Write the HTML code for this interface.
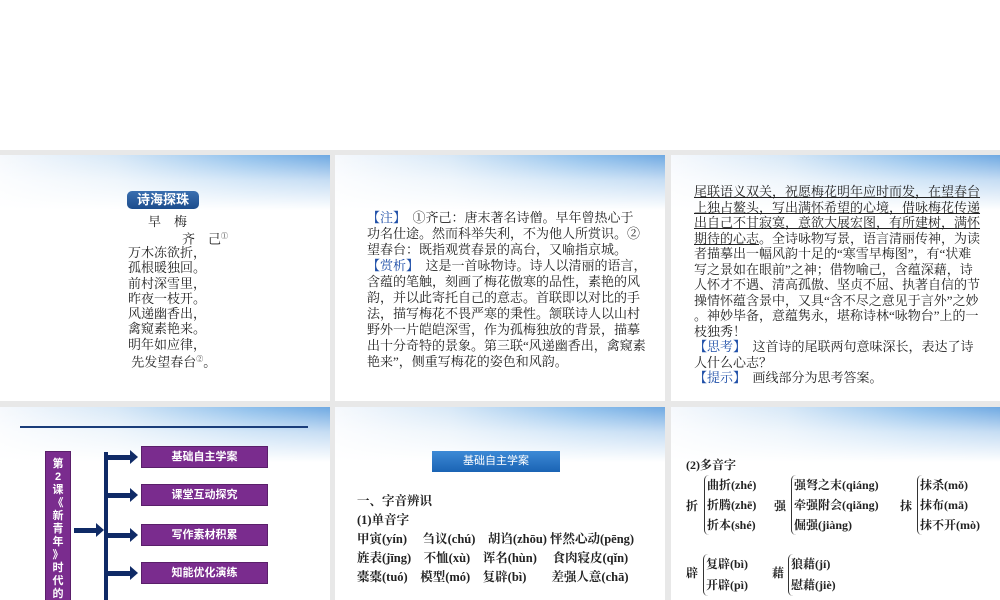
<!DOCTYPE html>
<html><head><meta charset="utf-8"><style>
*{margin:0;padding:0;box-sizing:border-box}
body{width:1000px;height:600px;background:#fff;position:relative;overflow:hidden;font-family:"Liberation Serif","Noto Serif CJK SC",serif;color:#222}
.gray{position:absolute;left:0;top:150px;width:1000px;height:450px;background:#e8e8e8}
.s{position:absolute;background:
 linear-gradient(180deg,rgba(255,255,255,0) 0,rgba(255,255,255,.6) 25px,#fff 55px),
 linear-gradient(90deg,#f6f9fd 0,#d7e8f7 35%,#8fc0ec 75%,#6fa9e2 100%);overflow:hidden}
.t{position:absolute;font-size:13px;line-height:15.6px;white-space:nowrap}
.b{color:#1f4fa8}
.u{text-decoration:underline}
.sans{font-family:"Liberation Sans","Noto Sans CJK SC",sans-serif}
.pb{position:absolute;background:#7a2c8e;color:#fff;font-size:11px;font-weight:bold;text-align:center;line-height:20px;font-family:"Liberation Sans","Noto Sans CJK SC",sans-serif;border:1px solid #5a1f6a}
.bold{font-weight:bold}
</style></head><body>
<div class="gray"></div>

<div class="s" style="left:0;top:155px;width:330px;height:246px">
 <div style="position:absolute;left:127px;top:36px;width:72px;height:18px;border-radius:5px;background:linear-gradient(180deg,#3a6fb0,#1c4c8c);color:#fff;font-size:13px;font-weight:bold;line-height:18px;text-align:center" class="sans">诗海探珠</div>
 <div class="t" style="left:148px;top:59px">早　梅</div>
 <div class="t" style="left:182px;top:74px">齐　己<sup style="font-size:7px">①</sup></div>
 <div class="t" style="left:128px;top:90px;line-height:15.3px">万木冻欲折，<br>孤根暖独回。<br>前村深雪里，<br>昨夜一枝开。<br>风递幽香出，<br>禽窥素艳来。<br>明年如应律，<br>&nbsp;先发望春台<sup style="font-size:7px">②</sup>。</div>
</div>

<div class="s" style="left:335px;top:155px;width:330px;height:246px">
 <div class="t" style="left:32px;top:55px;line-height:16px"><span class="b">【注】</span>　①齐己：唐末著名诗僧。早年曾热心于<br>功名仕途。然而科举失利，不为他人所赏识。②<br>望春台：既指观赏春景的高台，又喻指京城。<br><span class="b">【赏析】</span>　这是一首咏物诗。诗人以清丽的语言，<br>含蕴的笔触，刻画了梅花傲寒的品性，素艳的风<br>韵，并以此寄托自己的意志。首联即以对比的手<br>法，描写梅花不畏严寒的秉性。颔联诗人以山村<br>野外一片皑皑深雪，作为孤梅独放的背景，描摹<br>出十分奇特的景象。第三联“风递幽香出，禽窥素<br>艳来”，侧重写梅花的姿色和风韵。</div>
</div>

<div class="s" style="left:671px;top:155px;width:329px;height:246px">
 <div class="t" style="left:23px;top:29px;line-height:15.5px"><span class="u">尾联语义双关，祝愿梅花明年应时而发，在望春台<br>上独占鳌头，写出满怀希望的心境，借咏梅花传递<br>出自己不甘寂寞，意欲大展宏图，有所建树，满怀<br>期待的心志</span>。全诗咏物写景，语言清丽传神，为读<br>者描摹出一幅风韵十足的“寒雪早梅图”，有“状难<br>写之景如在眼前”之神；借物喻己，含蕴深藉，诗<br>人怀才不遇、清高孤傲、坚贞不屈、执著自信的节<br>操情怀蕴含景中，又具“含不尽之意见于言外”之妙<br>。神妙毕备，意蕴隽永，堪称诗林“咏物台”上的一<br>枝独秀！<br><span class="b">【思考】</span>　这首诗的尾联两句意味深长，表达了诗<br>人什么心志？<br><span class="b">【提示】</span>　画线部分为思考答案。</div>
</div>

<div class="s" style="left:0;top:407px;width:330px;height:193px">
 <div style="position:absolute;left:20px;top:19px;width:288px;height:2px;background:#1a3d7a"></div>
 <div class="pb" style="left:45px;top:44px;width:26px;height:160px;line-height:13px;padding-top:6px;font-size:11px">第<br>2<br>课<br>《<br>新<br>青<br>年<br>》<br>时<br>代<br>的</div>
 <div style="position:absolute;left:104px;top:45px;width:4px;height:160px;background:#0f2a66"></div>
 <div style="position:absolute;left:74px;top:121px;width:23px;height:5px;background:#0f2a66"></div>
 <div style="position:absolute;left:96px;top:116px;border-left:8px solid #0f2a66;border-top:7px solid transparent;border-bottom:7px solid transparent"></div>
 <div style="position:absolute;left:104px;top:48px;width:27px;height:5px;background:#0f2a66"></div><div style="position:absolute;left:130px;top:43px;border-left:8px solid #0f2a66;border-top:7px solid transparent;border-bottom:7px solid transparent"></div>
 <div style="position:absolute;left:104px;top:86px;width:27px;height:5px;background:#0f2a66"></div><div style="position:absolute;left:130px;top:81px;border-left:8px solid #0f2a66;border-top:7px solid transparent;border-bottom:7px solid transparent"></div>
 <div style="position:absolute;left:104px;top:126px;width:27px;height:5px;background:#0f2a66"></div><div style="position:absolute;left:130px;top:121px;border-left:8px solid #0f2a66;border-top:7px solid transparent;border-bottom:7px solid transparent"></div>
 <div style="position:absolute;left:104px;top:164px;width:27px;height:5px;background:#0f2a66"></div><div style="position:absolute;left:130px;top:159px;border-left:8px solid #0f2a66;border-top:7px solid transparent;border-bottom:7px solid transparent"></div>
 <div class="pb" style="left:141px;top:39px;width:127px;height:22px">基础自主学案</div>
 <div class="pb" style="left:141px;top:77px;width:127px;height:22px">课堂互动探究</div>
 <div class="pb" style="left:141px;top:117px;width:127px;height:22px">写作素材积累</div>
 <div class="pb" style="left:141px;top:155px;width:127px;height:22px">知能优化演练</div>
</div>

<div class="s" style="left:335px;top:407px;width:330px;height:193px">
 <div class="sans" style="position:absolute;left:97px;top:44px;width:128px;height:21px;background:linear-gradient(180deg,#3d8ad6,#1a63b4);color:#fff;font-size:11px;text-align:center;line-height:21px">基础自主学案</div>
 <div class="t bold" style="left:22px;top:85px;line-height:19px;font-size:12.5px">一、字音辨识<br>(1)单音字<br>甲寅(yín)　 刍议(chú)　胡诌(zhōu) 怦然心动(pēng)<br>旌表(jīng)　不恤(xù)　诨名(hùn)　 食肉寝皮(qǐn)<br>橐橐(tuó)　模型(mó)　复辟(bì)　　差强人意(chā)</div>
</div>

<div class="s" style="left:671px;top:407px;width:329px;height:193px">
 <div class="t bold" style="left:15px;top:51px;font-size:12px">(2)多音字</div>
 <div class="t bold" style="left:15px;top:92px;font-size:12px">折</div>
 <div class="t bold" style="left:33px;top:68px;font-size:12px;line-height:20px;border-left:1px solid #333;padding-left:2px;border-radius:5px 0 0 5px">曲折(zhé)<br>折腾(zhē)<br>折本(shé)</div>
 <div class="t bold" style="left:103px;top:92px;font-size:12px">强</div>
 <div class="t bold" style="left:120px;top:68px;font-size:12px;line-height:20px;border-left:1px solid #333;padding-left:2px;border-radius:5px 0 0 5px">强弩之末(qiáng)<br>牵强附会(qiǎng)<br>倔强(jiàng)</div>
 <div class="t bold" style="left:229px;top:92px;font-size:12px">抹</div>
 <div class="t bold" style="left:246px;top:68px;font-size:12px;line-height:20px;border-left:1px solid #333;padding-left:2px;border-radius:5px 0 0 5px">抹杀(mǒ)<br>抹布(mā)<br>抹不开(mò)</div>
 <div class="t bold" style="left:15px;top:159px;font-size:12px">辟</div>
 <div class="t bold" style="left:32px;top:147px;font-size:12px;line-height:21px;border-left:1px solid #333;padding-left:2px;border-radius:5px 0 0 5px">复辟(bì)<br>开辟(pì)</div>
 <div class="t bold" style="left:101px;top:159px;font-size:12px">藉</div>
 <div class="t bold" style="left:117px;top:147px;font-size:12px;line-height:21px;border-left:1px solid #333;padding-left:2px;border-radius:5px 0 0 5px">狼藉(jí)<br>慰藉(jiè)</div>
</div>
</body></html>
